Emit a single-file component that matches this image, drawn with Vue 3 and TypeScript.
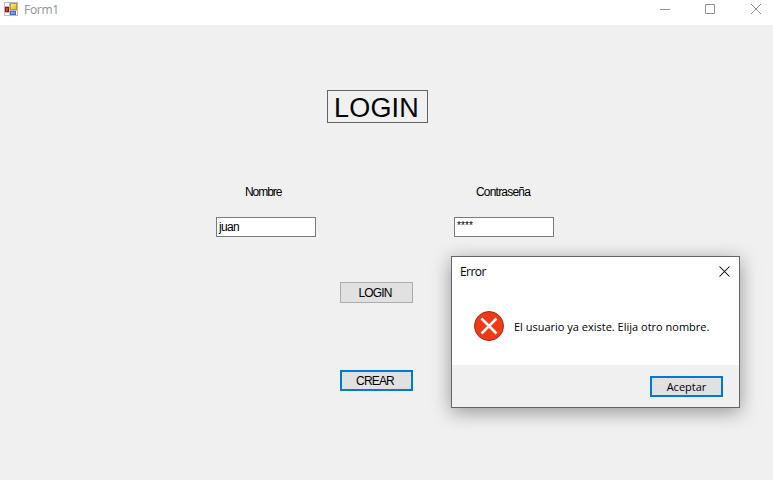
<script setup lang="ts">
import { ref } from 'vue'

const nombre = ref('juan')
const clave = ref('****')
const mensaje = ref('El usuario ya existe. Elija otro nombre.')
</script>

<template>
  <main class="window">
    <header class="titlebar">
      <svg class="app-icon" width="14" height="14" viewBox="0 0 14 14">
        <defs>
          <linearGradient id="gold" x1="0" y1="0" x2="1" y2="1">
            <stop offset="0" stop-color="#ffee9c" />
            <stop offset="1" stop-color="#f2b50c" />
          </linearGradient>
          <linearGradient id="blue" x1="0" y1="0" x2="1" y2="1">
            <stop offset="0" stop-color="#a3c4ff" />
            <stop offset="1" stop-color="#4a7ddf" />
          </linearGradient>
        </defs>
        <rect width="14" height="14" fill="#bcbcbc" />
        <path d="M1 1h4v3H1zM1 11h4v2H1zM12 9h1v4h-1z" fill="#fff" />
        <rect x="6" y="1" width="7" height="7" fill="#c8921c" />
        <rect x="7" y="2" width="5" height="5" fill="url(#gold)" />
        <rect x="1" y="5" width="4" height="5" fill="#9c1010" />
        <rect x="2" y="6" width="2" height="3" fill="#d8432e" />
        <rect x="6" y="9" width="6" height="4" fill="#3c6cd0" />
        <rect x="7" y="10" width="4" height="2" fill="url(#blue)" />
      </svg>
      <span class="caption">Form1</span>
      <div class="controls">
        <svg width="10" height="10" viewBox="0 0 10 10"><path d="M0 5.500h10" /></svg>
        <svg width="10" height="10" viewBox="0 0 10 10"><path d="M.5 .5h9v9h-9z" /></svg>
        <svg class="close" width="10" height="10" viewBox="0 0 10 10"><path d="M0 0l10 10M10 0L0 10" /></svg>
      </div>
    </header>

    <section class="form">
      <h1 class="heading"><span>LOGIN</span></h1>
      <div class="fields">
        <label class="field">
          <span class="label">Nombre</span>
          <span class="box"><span class="value">{{ nombre }}</span></span>
        </label>
        <label class="field">
          <span class="label wide">Contraseña</span>
          <span class="box"><span class="mask">{{ clave }}</span></span>
        </label>
      </div>
      <div class="actions">
        <button class="btn"><span>LOGIN</span></button>
        <button class="btn active"><span>CREAR</span></button>
      </div>
    </section>

    <div class="dialog" role="alertdialog">
      <div class="dialog-title">
        <span>Error</span>
        <svg width="11" height="11" viewBox="0 0 11 11"><path d="M.5 .5l10 10M10.500 .5l-10 10" /></svg>
      </div>
      <div class="dialog-body">
        <svg width="30" height="30" viewBox="0 0 30 30">
          <circle cx="15" cy="15" r="14.500" fill="#f03a17" stroke="#a52a18" />
          <path d="M7.500 7.500l15 15M22.500 7.500l-15 15" stroke="#fff" stroke-width="2.500" />
        </svg>
        <span class="message">{{ mensaje }}</span>
      </div>
      <div class="dialog-footer">
        <button class="btn active accept"><span>Aceptar</span></button>
      </div>
    </div>
  </main>
</template>

<style>
body {
  margin: 0;
  overflow: hidden;
}
</style>

<style scoped>
.window {
  position: relative;
  width: 773px;
  height: 480px;
  overflow: hidden;
  background: #f0f0f0;
  color: #000;
  font-family: "Liberation Sans", Arial, sans-serif;
}
.window * {
  box-sizing: border-box;
}
svg {
  display: block;
  flex: none;
}
.titlebar {
  display: flex;
  height: 25px;
  padding: 2px 12px 0 4px;
  background: #fff;
}
.caption {
  margin-left: 6px;
  color: #929292;
  font: 12px/16px "Open Sans", "Noto Sans", sans-serif;
  letter-spacing: -0.3px;
}
.controls {
  display: flex;
  gap: 35px;
  margin: 2px 0 0 auto;
}
.controls svg {
  fill: none;
  stroke: #929292;
}
.controls .close {
  margin-left: 1px;
}
.form {
  display: flex;
  flex-direction: column;
}
.heading {
  width: 101px;
  height: 33px;
  margin: 65px 0 0 327px;
  padding-left: 6px;
  border: 1px solid #646464;
  font-size: 27px;
  font-weight: 400;
  line-height: 34px;
  letter-spacing: 0.2px;
  white-space: nowrap;
}
.fields {
  display: flex;
  gap: 138px;
  margin: 61px 0 0 216px;
}
.field {
  display: flex;
  flex-direction: column;
  width: 100px;
}
.label {
  height: 16px;
  margin-left: 29px;
  font-size: 12px;
  line-height: 16px;
  letter-spacing: -1.05px;
}
.label.wide {
  margin-left: 22px;
  letter-spacing: -0.8px;
}
.box {
  height: 20px;
  margin-top: 17px;
  padding-left: 2px;
  border: 1px solid #7a7a7a;
  background: #fff;
  font-size: 12px;
  line-height: 19px;
}
.value {
  letter-spacing: -0.7px;
}
.mask {
  display: block;
  font-size: 10px;
  line-height: 16px;
  letter-spacing: 0.1px;
}
.actions {
  display: flex;
  flex-direction: column;
  gap: 67px;
  margin: 45px 0 0 340px;
}
.btn {
  display: flex;
  align-items: center;
  justify-content: center;
  width: 73px;
  height: 21px;
  padding: 2px 3px 0 0;
  border: 1px solid #adadad;
  background: #e1e1e1;
  color: #000;
  font: 12px/17px "Liberation Sans", Arial, sans-serif;
  letter-spacing: -0.85px;
}
.btn.active {
  border: 2px solid #0078d7;
}
.dialog {
  position: absolute;
  left: 451px;
  top: 256px;
  display: flex;
  flex-direction: column;
  width: 289px;
  height: 152px;
  border: 1px solid #646464;
  background: #fff;
  box-shadow: 0 4px 18px rgba(0, 0, 0, 0.38);
  font-family: "Open Sans", "Noto Sans", sans-serif;
}
.dialog-title {
  display: flex;
  justify-content: space-between;
  height: 30px;
  padding: 6px 9px 0 8px;
  font-size: 12px;
  line-height: 17px;
}
.dialog-title span {
  letter-spacing: -0.55px;
}
.dialog-title svg {
  margin-top: 3px;
  stroke: #000;
  stroke-width: 1.050;
}
.dialog-body {
  display: flex;
  align-items: center;
  gap: 10px;
  height: 78px;
  padding: 0 0 0 22px;
}
.message {
  padding-top: 2px;
  font-size: 11px;
  line-height: 16px;
  white-space: nowrap;
}
.dialog-footer {
  display: flex;
  flex: 1;
  justify-content: flex-end;
  padding: 11px 16px 0 0;
  background: #f0f0f0;
}
.btn.accept {
  padding: 0;
  font: 11px/17px "Open Sans", "Noto Sans", sans-serif;
  letter-spacing: 0;
}
</style>
